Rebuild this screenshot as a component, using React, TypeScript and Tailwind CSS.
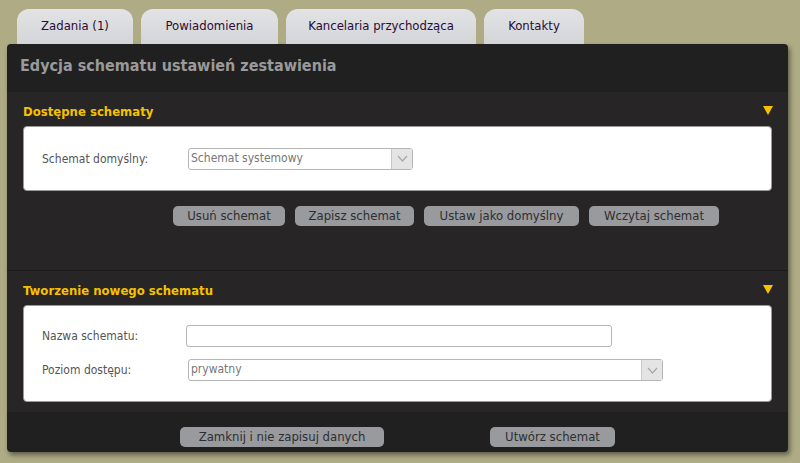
import React from "react";

const font = { fontFamily: '"DejaVu Sans Condensed", "DejaVu Sans", sans-serif' };

function Tab({ label, w }: { label: string; w: string }) {
  return (
    <div
      className={`${w} h-[35px] rounded-t-[12px] bg-gradient-to-b from-[#e2e3e5] to-[#d4d5d8] flex items-start justify-center pt-[7px] text-[13px] text-[#2b0b35]`}
    >
      {label}
    </div>
  );
}

function Btn({ label, w }: { label: string; w: string }) {
  return (
    <button
      className={`${w} h-[20px] rounded-[5px] bg-[#999a9e] text-[13px] leading-[20px] text-[#2e2e2e] text-center`}
    >
      {label}
    </button>
  );
}

function Select({ value, w }: { value: string; w: string }) {
  return (
    <div className={`${w} h-[22px] flex border border-[#b5b5b5] rounded-[3px] bg-white`}>
      <div className="flex-1 pl-[2px] text-[12px] leading-[19px] text-[#777]">{value}</div>
      <div className="w-[21px] border-l border-[#c8c8c8] bg-[#e4e4e4] flex items-center justify-center">
        <svg width="11" height="7" viewBox="0 0 11 7">
          <path d="M1 1 L5.5 6 L10 1" fill="none" stroke="#a8a8a8" strokeWidth="1.2" />
        </svg>
      </div>
    </div>
  );
}

function SectionHead({ title }: { title: string }) {
  return (
    <div className="relative h-[34px] pl-[16px] pt-[12px]">
      <span className="block text-[13px] leading-[16px] font-bold text-[#f5c200]">{title}</span>
      <svg width="10" height="10" viewBox="0 0 10 10" className="absolute right-[15px] top-[14px]">
        <polygon points="0,0 10,0 5,9" fill="#f7c300" />
      </svg>
    </div>
  );
}

export default function App() {
  return (
    <div className="w-[800px] h-[463px] bg-[#aeab85] pt-[9px] overflow-hidden" style={font}>
      {/* Tabs */}
      <div className="flex gap-[8px] pl-[17px]">
        <Tab label="Zadania (1)" w="w-[116px]" />
        <Tab label="Powiadomienia" w="w-[137px]" />
        <Tab label="Kancelaria przychodząca" w="w-[190px]" />
        <Tab label="Kontakty" w="w-[100px]" />
      </div>

      {/* Panel */}
      <div className="ml-[7px] w-[781px] h-[408px] rounded-[4px] bg-[#202020] shadow-[2px_3px_5px_rgba(0,0,0,0.45)] overflow-hidden flex flex-col">
        <div className="h-[48px] flex items-center pl-[13px] pb-[4px] text-[16px] font-bold text-[#9a9a9a]">
          Edycja schematu ustawień zestawienia
        </div>

        {/* Dostępne schematy */}
        <div className="h-[179px] bg-[#272526] border-b border-[#1b1b1b]">
          <SectionHead title="Dostępne schematy" />
          <div className="mx-[16px] h-[65px] bg-white rounded-[4px] border border-[#999] flex items-center pl-[18px]">
            <span className="w-[146px] text-[12px] text-[#555]">Schemat domyślny:</span>
            <Select value="Schemat systemowy" w="w-[225px]" />
          </div>
          <div className="flex gap-[10px] pl-[166px] mt-[15px]">
            <Btn label="Usuń schemat" w="w-[112px]" />
            <Btn label="Zapisz schemat" w="w-[119px]" />
            <Btn label="Ustaw jako domyślny" w="w-[155px]" />
            <Btn label="Wczytaj schemat" w="w-[130px]" />
          </div>
        </div>

        {/* Tworzenie nowego schematu */}
        <div className="h-[141px] bg-[#272526]">
          <SectionHead title="Tworzenie nowego schematu" />
          <div className="mx-[16px] h-[97px] bg-white rounded-[4px] border border-[#999] pl-[18px] pt-[19px] flex flex-col gap-[12px]">
            <div className="flex items-center">
              <span className="w-[144px] text-[12px] text-[#555]">Nazwa schematu:</span>
              <div className="w-[426px] h-[22px] border border-[#b5b5b5] rounded-[3px] bg-white" />
            </div>
            <div className="flex items-center">
              <span className="w-[146px] text-[12px] text-[#555]">Poziom dostępu:</span>
              <Select value="prywatny" w="w-[475px]" />
            </div>
          </div>
        </div>

        {/* Footer */}
        <div className="flex-1 flex items-start pt-[12px]">
          <div className="ml-[173px]">
            <Btn label="Zamknij i nie zapisuj danych" w="w-[204px]" />
          </div>
          <div className="ml-[106px]">
            <Btn label="Utwórz schemat" w="w-[125px]" />
          </div>
        </div>
      </div>
    </div>
  );
}
